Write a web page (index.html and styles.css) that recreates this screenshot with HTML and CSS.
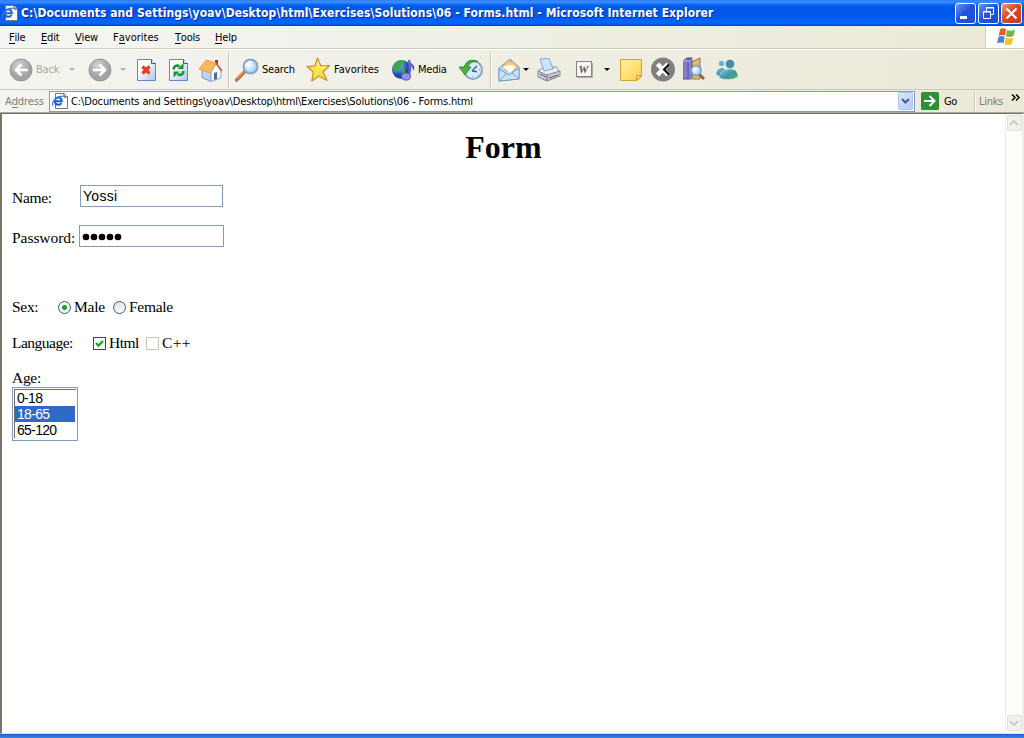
FILE: index.html
```html
<!DOCTYPE html>
<html lang="en">
<head>
<meta charset="utf-8">
<title>Form</title>
<link rel="stylesheet" href="styles.css">
</head>
<body>
<svg class="defs" width="0" height="0">
  <defs>
    <radialGradient id="grey" cx=".4" cy=".3"><stop offset="0" stop-color="#d5d5d3"/><stop offset="1" stop-color="#a3a3a1"/></radialGradient>
    <linearGradient id="page" x1="0" y1="0" x2="1" y2="1"><stop offset=".3" stop-color="#fff"/><stop offset="1" stop-color="#a9c5f5"/></linearGradient>
    <radialGradient id="lens" cx=".4" cy=".4"><stop offset="0" stop-color="#fff"/><stop offset="1" stop-color="#a5d5f8"/></radialGradient>
    <linearGradient id="note" x1="0" y1="0" x2="1" y2="1"><stop offset="0" stop-color="#fff3a8"/><stop offset="1" stop-color="#fbce47"/></linearGradient>
    <radialGradient id="globe" cx=".35" cy=".3"><stop offset="0" stop-color="#8cc4fa"/><stop offset="1" stop-color="#1745b4"/></radialGradient>
    <linearGradient id="people" x1="0" y1="0" x2="1" y2="1"><stop offset="0" stop-color="#8cc6e4"/><stop offset=".55" stop-color="#3e95a6"/><stop offset="1" stop-color="#62b64c"/></linearGradient>
    <linearGradient id="book"><stop offset="0" stop-color="#9994df"/><stop offset="1" stop-color="#4744a2"/></linearGradient>
    <symbol id="iepage" viewBox="0 0 16 16">
      <path d="M3.500.5h8.500l3.500 3.500v11.500h-12z" fill="#fffdf2" stroke="#77776f"/><path d="M12 .5v3.500h3.500" fill="#ddd" stroke="#444"/>
      <path d="M3 8.200h6.800c.2-4.800-7-4.800-7-.2 0 4.500 5.200 4.700 6.700 2" fill="none" stroke="#1e62cd" stroke-width="2"/>
      <path d="M1 12.500C-1.500 9.500 6 2 11 3.500" fill="none" stroke="#3b83dc" stroke-width="1.300"/>
    </symbol>
  </defs>
</svg>
<div class="window">
  <header class="titlebar">
    <svg class="title-icon" width="16" height="16"><use href="#iepage"/></svg>
    <span class="title">C:\Documents and Settings\yoav\Desktop\html\Exercises\Solutions\06 - Forms.html - Microsoft Internet Explorer</span>
    <div class="controls">
      <span class="control"><svg width="19" height="19"><path d="M4 13.500h7" stroke="#fff" stroke-width="3"/></svg></span>
      <span class="control"><svg width="19" height="19" fill="none" stroke="#fff"><path d="M7.500 7V3.500h7v7H12M7 4h8M4.500 7.500h7v7h-7zM4 8h8"/></svg></span>
      <span class="control close"><svg width="19" height="19"><path d="M4.500 4.500l10 10m0-10l-10 10" stroke="#fff" stroke-width="2.200"/></svg></span>
    </div>
  </header>
  <nav class="menubar">
    <span class="m-file"><u>F</u>ile</span><span class="m-edit"><u>E</u>dit</span><span class="m-view"><u>V</u>iew</span><span class="m-fav">F<u>a</u>vorites</span><span class="m-tools"><u>T</u>ools</span><span class="m-help"><u>H</u>elp</span>
    <div class="brand"><svg width="20" height="20" viewBox="0 0 20 20">
      <path d="M4 2.500q3-2.500 6-.3L9 8.800Q6 7 2.700 9z" fill="#e9592c"/><path d="M11 2.800q3.500 2 8-.3L17.500 9q-4 2-7.500.3z" fill="#76b83f"/>
      <path d="M2.500 10q3-2 6.200 0L7.500 16.500Q4.500 14.500 1 16.500z" fill="#4b83dc"/><path d="M9.800 10.500q3.500 1.700 7.500 0L15.800 17q-4 2-7.300.3z" fill="#f7c32c"/></svg></div>
  </nav>
  <div class="toolbar">
    <svg width="24" height="24"><circle cx="12" cy="12" r="11" fill="url(#grey)" stroke="#969694"/><path d="M19 12H7m5.500-5.500L7 12l5.500 5.500" fill="none" stroke="#fff" stroke-width="2.600"/></svg>
    <span class="label off">Back</span>
    <svg width="6" height="4"><path d="M0 0h6L3 3z" fill="#b5b3a6"/></svg>
    <svg width="24" height="24"><circle cx="12" cy="12" r="11" fill="url(#grey)" stroke="#969694"/><path d="M5 12h12m-5.500-5.500L17 12l-5.500 5.500" fill="none" stroke="#fff" stroke-width="2.600"/></svg>
    <svg width="6" height="4"><path d="M0 0h6L3 3z" fill="#b5b3a6"/></svg>
    <svg width="20" height="24"><path d="M.5 1.500h14l4 4v17H.5z" fill="url(#page)" stroke="#6487ca"/><path d="M14.500 1.500v4h4" fill="#e4edff" stroke="#36589e"/><path d="M5.500 8.500l7 7m0-7l-7 7" stroke="#e93c18" stroke-width="3.200"/></svg>
    <svg width="20" height="24"><path d="M.5 1.500h14l4 4v17H.5z" fill="url(#page)" stroke="#6487ca"/><path d="M14.500 1.500v4h4" fill="#e4edff" stroke="#36589e"/><path d="M4.500 11.500Q5 6.500 10.500 8" fill="none" stroke="#16962a" stroke-width="2.600"/><path d="M14.500 5v6H8.500z" fill="#16962a"/><path d="M14.500 13q-.5 5-6 3.500" fill="none" stroke="#16962a" stroke-width="2.600"/><path d="M4.500 19.500v-6h6z" fill="#16962a"/></svg>
    <svg width="24" height="24"><path d="M16 2h3v6h-3z" fill="#aa2c22"/><path d="M3 11.500l9 3v9l-9-4z" fill="#b9d6f7" stroke="#7995c2"/><path d="M12 14l5-8 5 7v7l-10 3.500z" fill="#f6faff" stroke="#8ba8d1"/><path d="M0 11L7 2l10 3-6 10z" fill="#fbb75c" stroke="#e9a04c"/><path d="M17 5l6 8" stroke="#c46a38" stroke-width="1.700"/><path d="M15 15l3-1v7l-3 1z" fill="#526b9c"/></svg>
    <i class="divider"></i>
    <svg width="25" height="24"><path d="M1.500 22l8-8" stroke="#b77643" stroke-width="3.600" stroke-linecap="round"/><path d="M1.500 21l7-7" stroke="#efb782"/><circle cx="15.500" cy="8.500" r="7" fill="url(#lens)" stroke="#8aa3ca" stroke-width="2"/><path d="M11 8q1-4 5-4" fill="none" stroke="#fff" stroke-width="2"/></svg>
    <span class="label">Search</span>
    <svg width="25" height="25"><path d="M11.500 1l3.300 8 8.700-.5-6.500 6.500 4 8.500-8.200-4.500-7 5 1.500-9L1 9.500l8-.7z" fill="#ffe14d" stroke="#cc8d19" stroke-width="1.200" stroke-linejoin="round"/><path d="M11.500 4l2 7 6-1" fill="none" stroke="#fff8c6"/></svg>
    <span class="label fav">Favorites</span>
    <svg width="24" height="24"><circle cx="9.500" cy="11.500" r="9.500" fill="url(#globe)"/><path d="M1 8Q4 1 11 2.500q3 1.500 1 3.500l-3 1q1 3-2 4l-3 4-3-3z" fill="#38a84a"/><path d="M9 12l4-2v6l-3 2z" fill="#38a84a"/><path d="M16.500 18V2h1q.5 3 3.500 5 2 2 .5 5-.5-3-3.500-4v10z" fill="#6866c4" stroke="#5553b5" stroke-width=".6"/><ellipse cx="14" cy="18.500" rx="4.500" ry="3.600" fill="#9290e8" stroke="#5552b0"/></svg>
    <span class="label">Media</span>
    <svg width="25" height="24"><circle cx="14" cy="12" r="9" fill="#d7ebfa" stroke="#91a1ba" stroke-width="2"/><path d="M13 13l5-5M13 13l5 .8" stroke="#345f9b" stroke-width="1.400"/><path d="M14 18v1M20 12h1M18.500 16.500l1 1" stroke="#6688b5"/><path d="M19 3.500Q9-1 5 9H0l6 8 6-8H9q1.500-6 10-5.500" fill="#48b43d" stroke="#237d2d" stroke-width=".8"/></svg>
    <i class="divider"></i>
    <svg width="23" height="24"><path d="M1 10L12 1l9 8v12L1 23z" fill="#b6d9fc" stroke="#7599ce"/><path d="M5 8q7-10 14 0l-3 5H8z" fill="#ffc780" stroke="#e7a75a"/><path d="M5 9q7-4 13 0l-6 6z" fill="#fffdf3"/><path d="M1 11l10 6 10-7v11L1 23z" fill="#c9e4ff" stroke="#7599ce"/><path d="M1 23l8-8m12 6l-7-6" stroke="#7599ce"/></svg>
    <svg width="6" height="4"><path d="M0 0h6L3 3z"/></svg>
    <svg width="24" height="24"><path d="M1 13l6-4h12l4 5-13 5z" fill="#eeeef1" stroke="#888897"/><path d="M3 1l9-1 4 11-9 2z" fill="#cae3ff" stroke="#7ea4d6"/><path d="M1 13l9 4v6l-9-4zm9 4l13-4v5l-13 5z" fill="#cacad4" stroke="#858593"/><path d="M3 16l6 3m3 1l9-3" stroke="#555562"/></svg>
    <svg width="17" height="17"><rect x=".5" y=".5" width="15" height="15" fill="#f7f7f7" stroke="#848484"/><path d="M1 16.500h15.500V2" fill="none" stroke="#adada7"/><text x="2.500" y="12" class="word-letter">W</text></svg>
    <svg width="6" height="4"><path d="M0 0h6L3 3z"/></svg>
    <svg width="23" height="24"><path d="M.5 1.500h21V18l-5 4.500H.5z" fill="url(#note)" stroke="#d5a231"/><path d="M16.500 22.500l.5-5 4.500.5z" fill="#fff0a2" stroke="#c28d22"/></svg>
    <svg width="25" height="25"><circle cx="12" cy="12.500" r="12" fill="#808080"/><path d="M6.500 7l10.500 11m0-11L6.500 18" stroke="#fff" stroke-width="4.500"/><path d="M18 7.500L13 12.500l5 5" fill="none" stroke="#000" stroke-width="2"/></svg>
    <svg width="23" height="25"><path d="M0 4l4-3h5L8 22H0z" fill="url(#book)" stroke="#4c4994"/><path d="M0 4h7V22M7 4l3-3v19" fill="none" stroke="#b8b5ee"/><path d="M9 5l8-4v21H9z" fill="#dbbe73" stroke="#8c7441"/><path d="M16 17l5 5" stroke="#8c6937" stroke-width="3"/><circle cx="13" cy="13.500" r="5" fill="url(#lens)" stroke="#7697c5" stroke-width="1.500"/></svg>
    <svg width="25" height="24"><circle cx="6.500" cy="5.500" r="2.700" fill="#6fb0d8"/><path d="M1 16q1-6 5.500-6t4.500 5q-2 2-4 4-3 0-6-3" fill="url(#people)"/><circle cx="15" cy="6" r="4.600" fill="#448fa4" stroke="#ddeae6" stroke-width=".6"/><path d="M4 20q1-8 9-9h4q6 1 6 8-8 4.500-19 1" fill="url(#people)" stroke="#ddeae6" stroke-width=".6"/></svg>
  </div>
  <div class="addressbar">
    <span class="addr-label">A<u>d</u>dress</span>
    <div class="addr-field"><svg width="16" height="16"><use href="#iepage"/></svg><span class="addr">C:\Documents and Settings\yoav\Desktop\html\Exercises\Solutions\06 - Forms.html</span><span class="drop"><svg width="9" height="7"><path d="M1 1l3.500 3.500L8 1" fill="none" stroke="#4d6185" stroke-width="2.200"/></svg></span></div>
    <svg class="go-icon" width="18" height="18"><rect width="18" height="18" rx="1.500" fill="#2c9034"/><path d="M3 9h10M8.500 4l5 5-5 5" fill="none" stroke="#fff" stroke-width="2"/></svg>
    <span class="go">Go</span>
    <span class="links">Links</span>
    <svg class="chevron" width="9" height="7"><path d="M1 .5l3 3-3 3m4-6l3 3-3 3" fill="none" stroke="#000" stroke-width="1.500"/></svg>
  </div>
  <div class="viewport">
    <main>
      <h1>Form</h1>
      <div class="row name"><span class="key">Name:</span><span class="input">Yossi</span></div>
      <div class="row password"><span class="key">Password:</span><span class="input"><svg width="42" height="8"><g fill="#000"><circle cx="4" cy="4" r="3.300"/><circle cx="12" cy="4" r="3.300"/><circle cx="20" cy="4" r="3.300"/><circle cx="28" cy="4" r="3.300"/><circle cx="36" cy="4" r="3.300"/></g></svg></span></div>
      <div class="row sex"><span class="key">Sex:</span><i class="radio checked"></i><span class="option">Male</span><i class="radio"></i><span>Female</span></div>
      <div class="row language"><span class="key">Language:</span><i class="check"><svg width="11" height="11"><path d="M2 5l2.500 2.500L9 3" fill="none" stroke="#21a121" stroke-width="2.300"/></svg></i><span class="option">Html</span><i class="check pale"></i><span class="cpp">C++</span></div>
      <div class="row age">Age:</div>
      <div class="listbox"><div>0-18</div><div class="selected">18-65</div><div>65-120</div></div>
    </main>
    <div class="scrollbar">
      <span class="scroll-button"><svg width="10" height="8"><path d="M1 6l4-4 4 4" fill="none" stroke="#c3c3ba" stroke-width="1.700"/></svg></span>
      <span class="scroll-button"><svg width="10" height="8"><path d="M1 2l4 4 4-4" fill="none" stroke="#c3c3ba" stroke-width="1.700"/></svg></span>
    </div>
  </div>
  <footer class="frame-bottom"></footer>
</div>
</body>
</html>
```
FILE: styles.css
```css
* { box-sizing: border-box; }
body { margin: 0; overflow: hidden; }
svg { display: block; flex: none; }
.defs { position: absolute; }
.window { width: 1024px; height: 738px; display: flex; flex-direction: column; background: #ece9d8; font: 11px "DejaVu Sans Condensed", "DejaVu Sans", sans-serif; color: #000; white-space: nowrap; }
u { text-decoration: none; box-shadow: 0 1px 0 currentColor; display: inline-block; line-height: 11px; }

.titlebar { height: 26px; flex: none; display: flex; align-items: center; padding: 0 2px 0 2px; background: linear-gradient(#2b7bf5 0, #3b91ff 2px, #0660ee 5px, #0055e5 10px, #0058ec 16px, #0267ff 22px, #0060f5 24px, #0040bd 26px); }
.title-icon { margin-right: 3px; }
.title { width: 696px; font: bold 12px "DejaVu Sans Condensed", sans-serif; color: #fff; text-shadow: 1px 1px 0 #0a2a8a; letter-spacing: .075px; }
.controls { display: flex; gap: 2px; margin-left: auto; }
.control { width: 21px; height: 21px; border: 1px solid #fff; border-radius: 3px; background: linear-gradient(135deg, #6c94f4, #2454de 45%, #1d4bd0); }
.close { background: linear-gradient(135deg, #f1987f, #dc4b28 45%, #c93818); }

.menubar { height: 23px; flex: none; display: flex; align-items: center; padding-left: 9px; background: linear-gradient(90deg, #f5f5f3, #ece9d8); border-bottom: 1px solid #d1cdbb; }
.m-file { width: 32px; }
.m-edit { width: 34px; }
.m-view { width: 38px; }
.m-fav { width: 62px; }
.m-tools { width: 40px; }
.menubar span { letter-spacing: -.2px; }
.menubar .m-fav { letter-spacing: .02px; }
.brand { width: 39px; height: 22px; margin-left: auto; padding: 1px 0 0 10px; background: #fff; border-left: 1px solid #d1cdbb; }

.toolbar { height: 41px; flex: none; display: grid; align-items: center; padding-left: 9px; grid-template-columns: 27px 33px 19px 32px 17px 32px 30px 29px 7px 27px 44px 28px 58px 26px 41px 31px 8px 25px 14px 39px 28px 16px 31px 32px 32px 26px; background: linear-gradient(90deg, #f4f4f0, #ece9d8); border-top: 1px solid #fff; border-bottom: 1px solid #cbc8b8; }
.label { letter-spacing: -.2px; }
.fav { letter-spacing: .05px; }
.off { color: #a9a799; }
.divider { width: 2px; height: 36px; border-left: 1px solid #c9c6b6; border-right: 1px solid #fff; }
.word-letter { font: italic bold 11px "Liberation Serif", serif; fill: #555; }

.addressbar { height: 23px; flex: none; display: flex; align-items: center; padding-left: 5px; background: linear-gradient(90deg, #f4f4f0, #ece9d8); border-bottom: 1px solid #aaa89a; }
.addr-label { width: 44px; color: #7d7b70; letter-spacing: -.1px; }
.addr-field { width: 866px; height: 21px; display: flex; align-items: center; padding-left: 2px; background: #fff; border: 1px solid #7f9db9; }
.addr { margin-left: 3px; letter-spacing: -.135px; }
.drop { width: 15px; height: 18px; margin: 0 1px 0 auto; display: grid; place-items: center; border-radius: 2px; border: 1px solid #aec2ef; background: linear-gradient(135deg, #dce7ff, #b5caf9); }
.go-icon { margin-left: 6px; }
.go { width: 30px; margin-left: 5px; letter-spacing: -.5px; }
.links { height: 21px; padding: 4px 0 0 4px; width: 37px; border-left: 1px solid #c9c6b6; box-shadow: inset 1px 0 #fff; color: #7d7b70; letter-spacing: -.3px; }
.chevron { margin: -8px 4px 0 auto; }

.viewport { height: 621px; flex: none; display: flex; background: #fff; border-left: 2px solid #777568; border-top: 1px solid #716f64; border-right: 2px solid #f1efe2; border-bottom: 1px solid #e2e0d2; }
main { flex: 1; padding: 16px 0 0 10px; font: 15.5px/20px "Liberation Serif", serif; letter-spacing: -.3px; }
h1 { margin: 0 0 20px -10px; text-align: center; font-size: 32px; line-height: 35px; letter-spacing: 0; }
.row { display: flex; align-items: center; height: 22px; }
.name .key { width: 68px; padding-top: 3px; }
.name .input { width: 143px; }
.password { margin-top: 18px; letter-spacing: -.05px; }
.password .key { width: 67px; padding-top: 3px; }
.password .input { width: 145px; }
.input { height: 22px; display: flex; align-items: center; padding-left: 2px; border: 1px solid #7f9db9; font: 14px "Liberation Sans", sans-serif; letter-spacing: .3px; }
.password svg { margin-top: 2px; }
.sex { margin-top: 49px; }
.sex .key { width: 46px; }
.radio { width: 13px; height: 13px; margin-right: 3px; border: 1px solid #315c89; border-radius: 50%; background: linear-gradient(135deg, #dcdcd7, #fff); }
.checked { background: radial-gradient(circle, #21a121 0 2px, transparent 3px), #f4f4f2; }
.option { width: 39px; }
.sex .option { letter-spacing: -.2px; }
.language { margin-top: 14px; }
.language .option { width: 37px; letter-spacing: -.5px; }
.language .key { width: 81px; letter-spacing: -.5px; }
.cpp { letter-spacing: .3px; }
.check { width: 13px; height: 13px; margin-right: 3px; border: 1px solid #1c5180; }
.pale { border-color: #c9c7ba; }
.age { margin-top: 14px; height: 19px; }
.listbox { width: 66px; height: 54px; border: 1px solid #7f9db9; padding: 1px; font: 14px/16px "Liberation Sans", sans-serif; letter-spacing: -.7px; }
.listbox::before { content: ""; display: block; height: 1px; background: #716f64; }
.listbox div { padding-left: 2px; margin-right: 1px; border-left: 1px solid #716f64; }
.selected { color: #fff; background: #316ac5; }
.scrollbar { width: 17px; display: flex; flex-direction: column; justify-content: space-between; align-items: center; padding: 1px 0 2px; background: #fdfdf9; border-left: 1px solid #eeede5; }
.scroll-button { width: 15px; height: 16px; display: grid; place-items: center; border: 1px solid #e2e1d6; border-radius: 2px; background: #f3f2ea; }
.frame-bottom { flex: 1; background: linear-gradient(#1f5fd0, #3f82e6); }
```
